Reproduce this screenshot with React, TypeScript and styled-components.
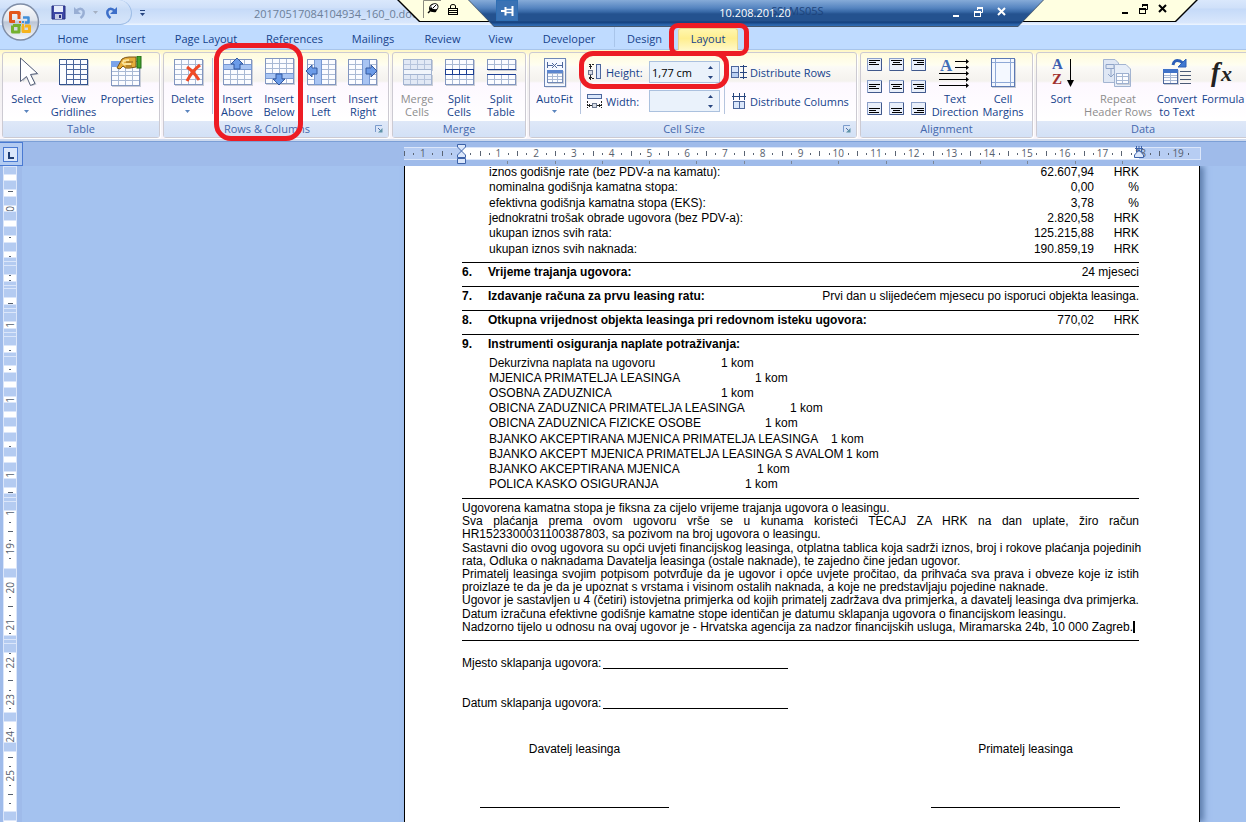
import React from "react";
import styled, { createGlobalStyle, css } from "styled-components";

const GlobalStyle = createGlobalStyle`
  *, *::before, *::after { box-sizing: border-box; }
  body { margin: 0; background: #a4c2ef; overflow: hidden; }
  button, input { font: inherit; color: inherit; margin: 0; }
`;

const uiFont = '"Open Sans", "Noto Sans", sans-serif';
const docFont = '"Liberation Sans", Arial, sans-serif';

/* ---------- frame ---------- */

const Window = styled.div`
  position: relative;
  display: flex;
  flex-direction: column;
  height: 100vh;
  min-width: 0;
  overflow: hidden;
  font: 11px/13px ${uiFont};
  color: #15428b;
`;

const PlainButton = styled.button`
  display: flex;
  align-items: center;
  justify-content: center;
  padding: 0;
  border: 0;
  background: none;
  white-space: nowrap;
`;

const TitleBar = styled.header`
  display: flex;
  align-items: center;
  height: 25px;
  flex: none;
  padding-left: 40px;
  background: linear-gradient(#dae8fc 0, #cfe0f9 8px, #c5daf8 9px, #d9e7fc 23px, #eaf3ff 24px);
`;

const OfficeButton = styled(PlainButton)`
  position: absolute;
  z-index: 3;
  left: 1px;
  top: 2px;
  width: 40px;
  height: 40px;
`;

const QuickAccess = styled.div`
  display: flex;
  align-items: center;
  align-self: stretch;
  width: 92px;
  gap: 7px;
  padding: 0 12px 0 11px;
  border: 1px solid #9ebde6;
  border-width: 0 1px 1px 0;
  border-radius: 0 14px 12px 0;
  background: linear-gradient(#dce9fb, #c9dcf6 40%, #d6e5fa);
`;

const CustomizeButton = styled(PlainButton)`
  width: 20px;
`;

const DocumentTitle = styled.h1`
  margin: 2px 0 0 102px;
  font: 11px/13px ${uiFont};
  color: #6c7f99;
`;

/* ---------- remote connection bar ---------- */

const HostBar = styled.div`
  position: absolute;
  z-index: 4;
  top: 0;
  left: 397px;
  width: 801px;
  height: 22px;
  display: flex;
  align-items: flex-start;
  justify-content: space-between;
  padding: 0 29px 0 26px;
  background: #000;
  clip-path: polygon(0 0, 22px 100%, calc(100% - 22px) 100%, 100% 0);

  &::before {
    content: "";
    position: absolute;
    inset: 0 2px 1px 2px;
    background: #ffffe1;
    clip-path: polygon(0 0, 21px 100%, calc(100% - 21px) 100%, 100% 0);
  }
`;

const HostGroup = styled.div`
  position: relative;
  display: flex;
  align-items: center;
  gap: 7px;
  color: #000;
  height: 18px;
`;

const RemoteBar = styled.div`
  position: absolute;
  z-index: 5;
  top: 0;
  left: 468px;
  width: 576px;
  height: 27px;
  background: #46586e;
  clip-path: polygon(0 0, 26px 100%, calc(100% - 26px) 100%, 100% 0);
`;

const RemoteFace = styled.div`
  display: grid;
  grid-template-columns: 1fr auto 1fr;
  align-items: start;
  height: 26px;
  padding: 0 36px 0 28px;
  background: linear-gradient(#86abd8 0, #5584c0 8px, #3667a5 12px, #24528f 14px, #24528f 21px, #123d7a 22px, #2d68b0 25px);
  clip-path: polygon(1px 0, 26px 100%, calc(100% - 26px) 100%, calc(100% - 1px) 0);
  color: #fff;
`;

const PinButton = styled(PlainButton)`
  width: 22px;
  height: 21px;
  border: 1px solid #2f6fb4;
  background: #3a72b4;
`;

const RemoteName = styled.div`
  position: relative;
  padding: 5px 0 0 6px;
  line-height: 15px;
`;

const SessionName = styled.span`
  position: absolute;
  left: 58px;
  top: 3px;
  z-index: -1;
  line-height: 15px;
  color: #1d447c;
`;

const RemoteControls = styled.div`
  display: flex;
  justify-content: flex-end;
  align-items: center;
  gap: 11px;
  height: 24px;
`;

/* ---------- tabs ---------- */

const TabRow = styled.nav`
  display: flex;
  align-items: stretch;
  flex: none;
  height: 25px;
  padding-left: 44px;
  background: #bfdbff;
  border-bottom: 1px solid #a9c5ea;
`;

const Tab = styled(PlainButton)<{ $w: number; $active?: boolean; $context?: boolean }>`
  width: ${(p) => p.$w}px;
  padding-top: 3px;
  ${(p) =>
    p.$context &&
    css`
      margin-left: 3px;
      box-shadow: -3px 0 0 -2px #a9c5ea;
    `}
  ${(p) =>
    p.$active &&
    css`
      margin: 3px 0 -1px 4px;
      padding: 0 0 2px;
      border-radius: 3px 3px 0 0;
      border: 1px solid #e9d68c;
      border-bottom: 0;
      background: linear-gradient(#fff6ae, #ffee8e 45%, #fff8c8);
    `}
`;

/* ---------- ribbon ---------- */

const Ribbon = styled.div`
  display: flex;
  flex: none;
  height: 89px;
  gap: 3px;
  padding: 2px 0 1px 2px;
  overflow: hidden;
  background: linear-gradient(#fff7c4 0, #fffce8 8px, #f2f0f0 30px, #f8f4fa 100%);
`;

const GroupBox = styled.section<{ $w?: number }>`
  display: flex;
  flex-direction: column;
  ${(p) => (p.$w ? `flex: 0 0 ${p.$w}px;` : "flex: 1 0 214px;")}
  border: 1px solid #cccad2;
  border-radius: 3px;
  box-shadow: 1px 1px 0 #fff;
  background: linear-gradient(#fffbdc 0, #fffef0 12px, #fbfaf6 14px, #f4f2ee 28px, #fdf8ff 30px, #fff 66px);
`;

const GroupBody = styled.div`
  display: flex;
  flex: 1;
  min-height: 0;
  padding: 3px 3px 0;
`;

const GroupTitle = styled.h2<{ $launcher?: boolean }>`
  position: relative;
  flex: none;
  margin: 0;
  height: 16px;
  padding-right: ${(p) => (p.$launcher ? 18 : 0)}px;
  font: 11px/16px ${uiFont};
  text-align: center;
  color: #4568ad;
  background: linear-gradient(#dfe8f8, #d3e1f6);
`;

const Launcher = styled(PlainButton)`
  position: absolute;
  right: 5px;
  top: 4px;
`;

const BigButton = styled(PlainButton)<{ $w: number }>`
  flex: 0 0 ${(p) => p.$w}px;
  min-width: 0;
  flex-direction: column;
  justify-content: flex-start;
  &:disabled { color: #8d8d8d; }
`;

const BigLabel = styled.span`
  margin-top: 4px;
  text-align: center;
  white-space: pre;
`;

const Divider = styled.div`
  flex: none;
  width: 1px;
  height: 56px;
  margin: 2px 3px 0 4px;
  background: #b5c4de;
`;

const FieldStack = styled.div`
  display: flex;
  flex-direction: column;
  gap: 7px;
  padding: 5px 0 0 3px;
`;

const Field = styled.div`
  display: grid;
  grid-template-columns: 19px 43px 71px;
  align-items: center;
  height: 22px;
`;

const SpinBox = styled.div`
  display: flex;
  height: 22px;
  border: 1px solid #abc1de;
  background: #eaf2fb;
`;

const SpinInput = styled.input`
  flex: 1;
  min-width: 0;
  padding: 0 2px;
  border: 0;
  outline: 0;
  background: transparent;
  color: #000;
`;

const SpinArrows = styled.div`
  display: flex;
  flex-direction: column;
  width: 17px;
`;

const SpinButton = styled(PlainButton)`
  flex: 1;
`;

const DistributeButton = styled(PlainButton)`
  justify-content: flex-start;
  gap: 2px;
  height: 22px;
`;

const AlignGrid = styled.div`
  display: grid;
  flex: 0 0 69px;
  grid-template-columns: repeat(3, 22px);
  grid-auto-rows: 22px;
  padding: 2px 0 0 3px;
`;

const AlignButton = styled(PlainButton)`
  align-items: flex-start;
  justify-content: flex-start;
`;

/* ---------- rulers ---------- */

const RulerRow = styled.div`
  display: flex;
  flex: none;
  height: 27px;
  border-top: 2px solid #cdd9ee;
  background: #9fbbea;
  box-shadow: inset 0 1px 0 #7c9fd6;
`;

const TabStop = styled(PlainButton)`
  width: 23px;
  height: 24px;
  margin-top: 1px;
  border: 1px solid #4a7ad2;
  border-left: 0;
  background: #b3cbf1;
  padding-right: 1px;
`;

const RulerTrack = styled.div`
  position: relative;
  width: 797px;
  margin: 6px 0 0 381px;
`;

const RulerCells = styled.div`
  display: grid;
  grid-template-columns: repeat(21, 1fr);
  height: 13px;
  padding-right: 3px;
  border: 1px solid #dbe6fa;
  border-left-width: 0;
  background: linear-gradient(90deg, #b7cdf3 57px, #fff 57px, #fff 735px, #b7cdf3 735px);
`;

const RulerCell = styled.span`
  font: 10px/11px ${uiFont};
  text-align: center;
  color: #56606e;
  background:
    linear-gradient(#5a6473, #5a6473) 0 50% / 1px 5px no-repeat,
    linear-gradient(#5a6473, #5a6473) 25% 50% / 1px 2px no-repeat,
    linear-gradient(#5a6473, #5a6473) 77% 50% / 1px 2px no-repeat;
`;

const DefaultTabs = styled.div`
  display: grid;
  grid-template-columns: repeat(14, 1fr);
  width: 662px;
  height: 3px;
  margin: 1px 0 0 57px;
  & > i { border-right: 1px solid #7b8696; }
`;

const IndentMarker = styled.div<{ $x: number }>`
  position: absolute;
  left: ${(p) => p.$x}px;
  top: -4px;
`;

const Workspace = styled.main`
  display: flex;
  flex: 1;
  min-height: 0;
  overflow: hidden;
`;

const VRulerGutter = styled.div`
  flex: 0 0 22px;
  padding-left: 3px;
  background: #9fbbea;
`;

const VRuler = styled.div`
  display: flex;
  flex-direction: column;
  gap: 1px;
  width: 14px;
  padding: 1px;
  background: #dbe6fa;
`;

const VSegment = styled.div<{ $h: number; $white?: boolean; $top?: number; $bottom?: number }>`
  display: flex;
  flex: none;
  flex-direction: column;
  align-items: center;
  justify-content: space-between;
  overflow: hidden;
  height: ${(p) => p.$h}px;
  padding: ${(p) => p.$top ?? 0}px 0 ${(p) => p.$bottom ?? 0}px;
  background: ${(p) => (p.$white ? "#fff" : "#b4cbf1")};
`;

const VMark = styled.span`
  display: flex;
  align-items: center;
  justify-content: center;
  height: 0;
  width: 12px;
  color: #56606e;
  font: 10px/12px ${uiFont};
  & > b { writing-mode: vertical-rl; transform: rotate(180deg); font-weight: 400; }
  & > i { height: 1px; flex: none; background: #56606e; }
`;

/* ---------- document ---------- */

const Page = styled.article`
  flex: 0 0 796px;
  min-width: 0;
  margin-left: 382px;
  padding: 0 60px 0 57px;
  border: solid #000;
  border-width: 0 1px;
  background: #fff;
  box-shadow: 4px 0 6px #5f7fae;
  color: #000;
  font: 12px/13px ${docFont};
  white-space: nowrap;
`;

const CostTable = styled.table`
  width: 100%;
  height: 92px;
  margin-bottom: 4px;
  border-collapse: collapse;
  td { padding: 0; vertical-align: top; }
  td:first-child { padding-left: 27px; }
  td:nth-child(2) { text-align: right; width: 120px; }
  td:last-child { text-align: right; width: 45px; }
`;

const Clause = styled.div`
  display: grid;
  grid-template-columns: 26px 1fr auto auto;
  height: 24px;
  padding-top: 3px;
  border-top: 1px solid #000;
`;

const Strong = styled.b``;

const Unit = styled.span`
  width: 45px;
  text-align: right;
`;

const Instruments = styled.ul`
  display: grid;
  grid-auto-rows: 1fr;
  height: 136px;
  margin: -2px 0 6px;
  padding: 0 0 0 27px;
  list-style: none;
  align-items: center;
`;

const Instrument = styled.li<{ $tab: number }>`
  display: flex;
  & > span { width: ${(p) => p.$tab}px; }
`;

const Terms = styled.div`
  display: grid;
  grid-template-columns: 100%;
  grid-auto-rows: 1fr;
  height: 143px;
  padding: 3px 0 6px;
  border: solid #000;
  border-width: 1px 0;
`;

const Line = styled.p<{ $justify?: boolean }>`
  margin: 0;
  text-align-last: ${(p) => (p.$justify ? "justify" : "left")};
`;

const Caret = styled.span`
  display: inline-block;
  width: 2px;
  height: 12px;
  vertical-align: -2px;
  background: #000;
`;

const SignLine = styled.div`
  display: flex;
  gap: 2px;
  height: 40px;
  padding-top: 16px;
`;

const Blank = styled.span`
  width: 185px;
  height: 12px;
  border-bottom: 1px solid #000;
`;

const Signatures = styled.div`
  display: flex;
  justify-content: space-between;
  margin-top: 22px;
  padding: 0 19px 0 18px;
`;

const Signature = styled.div`
  width: 189px;
  height: 65px;
  border-bottom: 1px solid #000;
  text-align: center;
`;

const RedMark = styled.div<{ $x: number; $y: number; $w: number; $h: number; $r: number }>`
  position: absolute;
  z-index: 6;
  left: ${(p) => p.$x}px;
  top: ${(p) => p.$y}px;
  width: ${(p) => p.$w}px;
  height: ${(p) => p.$h}px;
  border: 5px solid #ed1c24;
  border-radius: ${(p) => p.$r}px;
  pointer-events: none;
`;

/* ---------- icons ---------- */

const IconFrame = styled.svg`
  flex: none;
`;

const Svg = ({ w = 32, h = 32, children }: { w?: number; h?: number; children: React.ReactNode }) => (
  <IconFrame width={w} height={h} viewBox={`0 0 ${w} ${h}`} fill="none" aria-hidden="true">
    {children}
  </IconFrame>
);

type GridProps = { x: number; y: number; w: number; h: number; cols: number; rows: number; stroke?: string; fill?: string; edge?: string };
const Grid = ({ x, y, w, h, cols, rows, stroke = "#a9b9d4", fill = "#fbfcff", edge = "#8296c0" }: GridProps) => (
  <g shapeRendering="crispEdges">
    <rect x={x + 1} y={y + 1} width={w} height={h} fill="#c9cdd6" />
    <rect x={x} y={y} width={w} height={h} fill={fill} />
    {Array.from({ length: cols - 1 }, (_, i) => (
      <rect key={`c${i}`} x={x + Math.round(((i + 1) * (w - 1)) / cols)} y={y} width="1" height={h} fill={stroke} />
    ))}
    {Array.from({ length: rows - 1 }, (_, i) => (
      <rect key={`r${i}`} x={x} y={y + Math.round(((i + 1) * (h - 1)) / rows)} width={w} height="1" fill={stroke} />
    ))}
    <rect x={x + 0.5} y={y + 0.5} width={w - 1} height={h - 1} stroke={edge} />
  </g>
);

const arrowPath = "M0 -6 L6 0 H3 V5 H-3 V0 H-6 Z";
const Arrow = ({ x, y, r }: { x: number; y: number; r: number }) => (
  <path d={arrowPath} transform={`translate(${x} ${y}) rotate(${r})`} fill="#6b9be8" stroke="#33589f" />
);

const Drop = ({ color = "#4a6ea9" }: { color?: string }) => (
  <svg width="5" height="3" viewBox="0 0 5 3" aria-hidden="true">
    <path d="M0 0H5L2.500 3Z" fill={color} />
  </svg>
);

const icons = {
  select: (
    <Svg>
      <path d="M11 3 L12 26 L16.500 21 L21 30 L25.500 28.500 L21 19.500 L28 18.500 Z" fill="#c8ccd4" />
      <path d="M9.500 2 V25.500 L15.500 20.500 L19.500 29.500 L24 27.500 L19.500 18.500 L26.500 17.500 Z" fill="#fff" stroke="#566079" />
    </Svg>
  ),
  gridlines: (
    <Svg>
      <Grid x={1} y={3} w={29} h={26} cols={1} rows={1} edge="#30508c" />
      <g fill="#4a659b" shapeRendering="crispEdges">
        <rect x="1" y="8" width="29" height="1" />
        {[8, 15, 22].map((x) => <rect key={x} x={x} y="3" width="1" height="26" />)}
        {[13, 18, 23].map((y) => <rect key={y} x="8" y={y} width="22" height="1" />)}
      </g>
    </Svg>
  ),
  properties: (
    <Svg>
      <Grid x={0} y={5} w={29} h={25} cols={4} rows={5} />
      <rect x="0" y="5" width="14" height="6" fill="#7ba3ea" />
      <path d="M6 12 L11 3 Q14 1 18 1 L25 1 V11 L19 12 Q14 13 12 10 L9 13 Z" fill="#e5ad3a" stroke="#7b5415" />
      <path d="M12 5 L18 4 M14 8 H20 M11 6 L14 9" stroke="#fbe39a" strokeWidth="2" />
      <path d="M15 6 H22 M15 10 H21" stroke="#8a5f18" />
      <rect x="26" y="0" width="4" height="12" fill="#43a32c" stroke="#226b16" />
    </Svg>
  ),
  del: (
    <Svg>
      <Grid x={2} y={3} w={29} h={26} cols={4} rows={5} />
      <path d="M15 11 Q22 16 27 24 M28 9 Q20 15 15 25" stroke="#f04a26" strokeWidth="3" />
    </Svg>
  ),
  above: (
    <Svg>
      <Grid x={2} y={3} w={29} h={26} cols={4} rows={5} />
      <rect x="2.500" y="8.500" width="28" height="5" fill="#a9c5f3" stroke="#7798d2" />
      <Arrow x={16} y={8} r={0} />
    </Svg>
  ),
  below: (
    <Svg>
      <Grid x={2} y={2} w={29} h={26} cols={4} rows={5} />
      <rect x="2.500" y="17.500" width="28" height="5" fill="#a9c5f3" stroke="#7798d2" />
      <Arrow x={16} y={23} r={180} />
    </Svg>
  ),
  left: (
    <Svg>
      <Grid x={2} y={3} w={29} h={26} cols={4} rows={5} />
      <rect x="9.500" y="3.500" width="7" height="25" fill="#a9c5f3" stroke="#7798d2" />
      <Arrow x={7} y={15} r={-90} />
    </Svg>
  ),
  right: (
    <Svg>
      <Grid x={1} y={3} w={29} h={26} cols={4} rows={5} />
      <rect x="15.500" y="3.500" width="7" height="25" fill="#a9c5f3" stroke="#7798d2" />
      <Arrow x={24} y={15} r={90} />
    </Svg>
  ),
  mergeCells: (
    <Svg>
      <Grid x={2} y={3} w={29} h={11} cols={4} rows={2} fill="#e2e9f5" edge="#a3b4d1" stroke="#b6c4dc" />
      <Grid x={2} y={18} w={29} h={11} cols={4} rows={2} fill="#e2e9f5" edge="#a3b4d1" stroke="#b6c4dc" />
      <rect x="2.500" y="13.500" width="28" height="5" fill="#f1f5fb" stroke="#a3b4d1" />
    </Svg>
  ),
  splitCells: (
    <Svg>
      <Grid x={2} y={3} w={29} h={26} cols={4} rows={5} />
      <rect x="2.500" y="13.500" width="28" height="5" fill="#fff" stroke="#1c3f94" />
      <path d="M9.500 14 V18 M16.500 14 V18 M23.500 14 V18" stroke="#1c3f94" />
    </Svg>
  ),
  splitTable: (
    <Svg>
      <Grid x={2} y={3} w={29} h={11} cols={4} rows={2} />
      <Grid x={2} y={18} w={29} h={11} cols={4} rows={2} />
      <path d="M2 13.500 H31 M2 18.500 H31" stroke="#1c3f94" />
    </Svg>
  ),
  autofit: (
    <Svg>
      <rect x="6.500" y="3.500" width="21" height="28" fill="#c9cdd6" />
      <rect x="5.500" y="2.500" width="21" height="28" fill="#f4f8ff" stroke="#6f87b5" />
      <path d="M8.500 6 V12 M23.500 6 V12 M9 9.500 H14 M18 9.500 H23 M13 7 L18 12 M18 7 L13 12" stroke="#4d679c" />
      <Grid x={8} y={14} w={16} h={13} cols={3} rows={4} edge="#6f87b5" />
      <rect x="8" y="14" width="16" height="3" fill="#5c86cf" />
    </Svg>
  ),
  textDirection: (
    <Svg>
      <text x="1" y="15" fontFamily="Liberation Serif, serif" fontWeight="700" fontSize="17" fill="#3f6fb8">A</text>
      <path d="M16 5.500 H28 M16 11.500 H28 M0 17.500 H28 M0 23.500 H28 M0 29.500 H28" stroke="#000" />
      <path d="M27 3 l3 2.500 l-3 2.500z M27 9 l3 2.500 l-3 2.500z M27 15 l3 2.500 l-3 2.500z M27 21 l3 2.500 l-3 2.500z M27 27 l3 2.500 l-3 2.500z" fill="#000" />
    </Svg>
  ),
  cellMargins: (
    <Svg>
      <rect x="5" y="3" width="24" height="29" fill="#c9cdd6" />
      <rect x="4.500" y="2.500" width="23" height="28" fill="#f4f8ff" stroke="#5c79b3" />
      <path d="M8.500 3 V30 M23.500 3 V30 M5 6.500 H27 M5 26.500 H27" stroke="#8ea8d6" />
    </Svg>
  ),
  sort: (
    <Svg>
      <text x="7" y="13" fontFamily="Liberation Serif, serif" fontWeight="700" fontSize="15" fill="#3c5fb0">A</text>
      <text x="7" y="28" fontFamily="Liberation Serif, serif" fontWeight="700" fontSize="15" fill="#a0312f">Z</text>
      <path d="M25.500 3 V26" stroke="#000" />
      <path d="M22 24 H29 L25.500 31 Z" fill="#000" />
    </Svg>
  ),
  repeat: (
    <Svg>
      <path d="M1.500 3.500 H13 L16.500 7 V26.500 H1.500 Z" fill="#dfe7f4" stroke="#a3b4d1" />
      <path d="M4 8.500 H12 V12.500 H4 Z M9 13 V21 M6 18 L9 21 L12 18" stroke="#8fa4c8" />
      <path d="M12.500 8.500 H24 L28.500 13 V30.500 H12.500 Z" fill="#e6edf8" stroke="#a3b4d1" />
      <Grid x={14} y={17} w={13} h={11} cols={2} rows={3} edge="#9db0d0" />
    </Svg>
  ),
  convert: (
    <Svg>
      <path d="M12 9 Q13 3 19 5 Q21 6 22 8" stroke="#2c5fb8" strokeWidth="3" />
      <path d="M25 3 V11 H17 Z" fill="#4079d0" stroke="#2c5fb8" />
      <Grid x={2} y={13} w={15} h={15} cols={2} rows={5} edge="#4d679c" />
      <rect x="2" y="13" width="15" height="4" fill="#3f72c8" />
      <path d="M19 15.500 H30 M19 19.500 H30 M19 23.500 H30 M19 27.500 H30" stroke="#4a5a75" />
    </Svg>
  ),
  formula: (
    <Svg>
      <text x="4" y="25" fontFamily="Liberation Serif, serif" fontStyle="italic" fontWeight="700" fontSize="27" fill="#222">f</text>
      <text x="14" y="25" fontFamily="Liberation Serif, serif" fontStyle="italic" fontWeight="700" fontSize="22" fill="#222">x</text>
    </Svg>
  ),
};

const HeightIcon = () => (
  <Svg w={16} h={16}>
    <path d="M2 .5 H8 M2 14.500 H8" stroke="#222" strokeDasharray="2 1" />
    <path d="M3.500 0 V5 M3.500 11 V16 M2 2.500 H5 M2 13.500 H5" stroke="#222" />
    <rect x="1.500" y="6.500" width="4" height="4" fill="#d7dce6" stroke="#6d7891" />
    <rect x="9.500" y=".5" width="4" height="14" fill="#dbe7fb" stroke="#4d679c" />
  </Svg>
);
const WidthIcon = () => (
  <Svg w={16} h={16}>
    <rect x=".5" y="1.500" width="14" height="4" fill="#dbe7fb" stroke="#4d679c" />
    <path d="M.5 8 V15 M14.500 8 V15" stroke="#222" strokeDasharray="2 1" />
    <path d="M0 12.500 H5 M10 12.500 H15 M2.500 11 V14 M12.500 11 V14" stroke="#222" />
    <rect x="5.500" y="10.500" width="4" height="4" fill="#d7dce6" stroke="#6d7891" />
  </Svg>
);
const RowsIcon = () => (
  <Svg w={17} h={16}>
    <rect x=".5" y="2.500" width="7" height="6" fill="#dbe7fb" stroke="#4d679c" />
    <rect x=".5" y="8.500" width="7" height="5" fill="#b9cff2" stroke="#4d679c" />
    <path d="M9 2.500 H16 M9 8.500 H16 M9 13.500 H16 M12.500 1 V15" stroke="#27457f" />
  </Svg>
);
const ColsIcon = () => (
  <Svg w={17} h={16}>
    <rect x="2.500" y="8.500" width="6" height="7" fill="#dbe7fb" stroke="#4d679c" />
    <rect x="8.500" y="8.500" width="5" height="7" fill="#dbe7fb" stroke="#4d679c" />
    <path d="M2.500 0 V7 M8.500 0 V7 M13.500 0 V7 M1 3.500 H15" stroke="#27457f" />
  </Svg>
);

const AlignIcon = ({ v, h }: { v: number; h: number }) => (
  <Svg w={15} h={13}>
    <rect x=".5" y=".5" width="14" height="12" fill="#e9effa" stroke="#8b9fc8" />
    <path d="M1 12.500 H14.500 V1" stroke="#41598c" />
    {[11, 7, 10].map((w, i) => (
      <rect key={i} x={2 + Math.round(((11 - w) * h) / 2)} y={2 + v * 2 + i * 2} width={w} height="1" fill="#000" />
    ))}
  </Svg>
);

const SaveIcon = () => (
  <Svg w={15} h={15}>
    <path d="M1 1 H14 V14 H1 Z" fill="#3d47a5" stroke="#262f80" />
    <rect x="3" y="1" width="9" height="6" fill="#e6ecfa" />
    <rect x="4" y="9" width="7" height="5" fill="#c5cbe6" />
    <rect x="8" y="10" width="2" height="3" fill="#262f80" />
  </Svg>
);
const CurveIcon = ({ flip, color }: { flip?: boolean; color: string }) => (
  <Svg w={13} h={13}>
    <g transform={flip ? "translate(13 0) scale(-1 1)" : undefined}>
      <path d="M3 5 Q8 .5 10.500 5 Q11.500 9 7.500 12" stroke={color} strokeWidth="2.500" />
      <path d="M1 1 V8 H8 Z" fill={color} />
    </g>
  </Svg>
);

const OfficeLogo = () => (
  <svg width="40" height="40" viewBox="0 0 40 40" aria-hidden="true">
    <defs>
      <linearGradient id="orb" x1="0" y1="0" x2="0" y2="1">
        <stop offset="0" stopColor="#fdfdfe" />
        <stop offset=".45" stopColor="#dfe4ec" />
        <stop offset=".5" stopColor="#bcc6d6" />
        <stop offset="1" stopColor="#f6f9fd" />
      </linearGradient>
    </defs>
    <circle cx="19.500" cy="20" r="18" fill="url(#orb)" stroke="#7f8da6" strokeWidth="1.500" />
    <g fill="none" strokeWidth="3" strokeLinejoin="round">
      <path d="M18 13 V10.500 H9.500 V19.500 H14" stroke="#e2561b" />
      <path d="M18 10 V17" stroke="#e2561b" />
      <path d="M22 15.500 H27.500 V20.500 H24" stroke="#3f8fd9" strokeWidth="2.500" />
      <path d="M12 23.500 H18 V30 H11.500 V23.500" stroke="#74b12f" strokeWidth="3" />
      <path d="M22 24 V29.500 H28.500 V24 H24" stroke="#f6b31c" strokeWidth="3" />
    </g>
    <g>
      <rect x="18" y="19" width="2" height="2" fill="#e2561b" />
      <rect x="21" y="19" width="2" height="2" fill="#3f8fd9" />
      <rect x="18" y="22" width="2" height="2" fill="#74b12f" />
      <rect x="21" y="22" width="2" height="2" fill="#f6b31c" />
    </g>
  </svg>
);

const MinIcon = () => <Svg w={12} h={12}><rect x="3" y="9" width="6" height="2" fill="currentColor" /></Svg>;
const RestoreIcon = () => (
  <Svg w={12} h={12}>
    <path d="M4.500 4 V1.500 H9.500 V6.500 H8" stroke="currentColor" />
    <path d="M4 2 H10" stroke="currentColor" strokeWidth="2" />
    <rect x="1.500" y="5.500" width="6" height="5" stroke="currentColor" />
    <path d="M1 6 H8" stroke="currentColor" strokeWidth="2" />
  </Svg>
);
const CloseIcon = () => <Svg w={12} h={12}><path d="M2 2 L9 9 M9 2 L2 9" stroke="currentColor" strokeWidth="2" /></Svg>;

/* ---------- data ---------- */

const tabs: [string, number][] = [
  ["Home", 58], ["Insert", 57], ["Page Layout", 94], ["References", 83], ["Mailings", 74],
  ["Review", 65], ["View", 51], ["Developer", 86],
];

const costs = [
  ["iznos godišnje rate (bez PDV-a na kamatu):", "62.607,94", "HRK"],
  ["nominalna godišnja kamatna stopa:", "0,00", "%"],
  ["efektivna godišnja kamatna stopa (EKS):", "3,78", "%"],
  ["jednokratni trošak obrade ugovora (bez PDV-a):", "2.820,58", "HRK"],
  ["ukupan iznos svih rata:", "125.215,88", "HRK"],
  ["ukupan iznos svih naknada:", "190.859,19", "HRK"],
];

const instruments: [string, number][] = [
  ["Dekurzivna naplata na ugovoru", 232],
  ["MJENICA PRIMATELJA LEASINGA", 266],
  ["OSOBNA ZADUZNICA", 232],
  ["OBICNA ZADUZNICA PRIMATELJA LEASINGA", 301],
  ["OBICNA ZADUZNICA FIZICKE OSOBE", 276],
  ["BJANKO AKCEPTIRANA MJENICA PRIMATELJA LEASINGA", 342],
  ["BJANKO AKCEPT MJENICA PRIMATELJA LEASINGA S AVALOM", 357],
  ["BJANKO AKCEPTIRANA MJENICA", 268],
  ["POLICA KASKO OSIGURANJA", 256],
];

const terms: [string, boolean][] = [
  ["Ugovorena kamatna stopa je fiksna za cijelo vrijeme trajanja ugovora o leasingu.", false],
  ["Sva plaćanja prema ovom ugovoru vrše se u kunama koristeći TECAJ ZA HRK na dan uplate, žiro račun", true],
  ["HR1523300031100387803, sa pozivom na broj ugovora o leasingu.", false],
  ["Sastavni dio ovog ugovora su opći uvjeti financijskog leasinga, otplatna tablica koja sadrži iznos, broj i rokove plaćanja pojedinih", true],
  ["rata, Odluka o naknadama Davatelja leasinga (ostale naknade), te zajedno čine jedan ugovor.", false],
  ["Primatelj leasinga svojim potpisom potvrđuje da je ugovor i opće uvjete pročitao, da prihvaća sva prava i obveze koje iz istih", true],
  ["proizlaze te da je da je upoznat s vrstama i visinom ostalih naknada, a koje ne predstavljaju pojedine naknade.", false],
  ["Ugovor je sastavljen u 4 (četiri) istovjetna primjerka od kojih primatelj zadržava dva primjerka, a davatelj leasinga dva primjerka.", false],
  ["Datum izračuna efektivne godišnje kamatne stope identičan je datumu sklapanja ugovora o financijskom leasingu.", false],
];

/* A segment is [height, marks, space above first mark, space below last]; no marks means a row gap. */
type Segment = [number, string?, number?, number?];
const segments: Segment[] = [
  [7], [5, ""], [8], [6, "-", 1], [8], [5, "0", 3], [8], [5, ""], [8], [6, ".", 1], [8], [5, ".", 4],
  [3], [3], [8], [6, ". .", 0, 1], [3], [2], [8], [6, "-", 5], [3], [3], [8], [6, "1", 3],
  [3], [3], [8], [6, ".", 4], [3], [8], [6, ".", 3], [8], [5, ""], [8], [5, "1", 3],
  [8], [5, ""], [8], [5, ""], [8], [5, ".", 4], [8], [5, ""], [8], [6, "1", 3], [8], [5, "-", 4],
  [3], [3], [8], [57, "1 . - . 19 .", 2, 10], [8], [57, "20 . - . 21 .", 10, 1], [3], [3], [8],
  [59, ". 22 . - . 23 .", 0, 3], [8], [20, ". 24", 6, 5], [8], [59, "- . 25 . - .", 5, 7], [8], [5, ""],
];

/* ---------- parts ---------- */

const Big = ({ icon, label, w, menu, disabled }: { icon: keyof typeof icons; label: string; w: number; menu?: boolean; disabled?: boolean }) => (
  <BigButton type="button" $w={w} disabled={disabled}>
    {icons[icon]}
    <BigLabel>{label}</BigLabel>
    {menu && <Svg w={7} h={11}><path d="M1 5H6L3.500 8Z" fill="#5a84bd" /></Svg>}
  </BigButton>
);

const Group = ({ title, w, launcher, children }: { title: string; w?: number; launcher?: boolean; children: React.ReactNode }) => (
  <GroupBox $w={w}>
    <GroupBody>{children}</GroupBody>
    <GroupTitle $launcher={launcher}>
      {title}
      {launcher && (
        <Launcher type="button" aria-label={`${title} options`}>
          <Svg w={8} h={8}>
            <path d="M.5 7 V.5 H7" stroke="#7b9ccd" />
            <path d="M3 3 L6 6" stroke="#4a6ea9" />
            <path d="M7.500 3 V7.500 H3 Z" fill="#5f93a8" />
          </Svg>
        </Launcher>
      )}
    </GroupTitle>
  </GroupBox>
);

const Spin = ({ id, label, value, icon }: { id: string; label: string; value: string; icon: React.ReactNode }) => (
  <Field>
    {icon}
    <label htmlFor={id}>{label}</label>
    <SpinBox>
      <SpinInput id={id} defaultValue={value} />
      <SpinArrows>
        <SpinButton type="button" aria-label={`Increase ${id}`}>
          <Svg w={5} h={3}><path d="M0 3H5L2.500 0Z" fill="#27457f" /></Svg>
        </SpinButton>
        <SpinButton type="button" aria-label={`Decrease ${id}`}><Drop color="#27457f" /></SpinButton>
      </SpinArrows>
    </SpinBox>
  </Field>
);

const MarkBar = styled.i<{ $w: number }>`
  width: ${(p) => p.$w}px;
`;

const Mark = ({ m }: { m: string }) => {
  if (m === "-") return <VMark><MarkBar $w={5} /></VMark>;
  if (m === ".") return <VMark><MarkBar $w={2} /></VMark>;
  return <VMark><b>{m}</b></VMark>;
};

export default function App() {
  return (
    <Window>
      <GlobalStyle />
      <TitleBar>
        <QuickAccess>
          <PlainButton type="button" aria-label="Save"><SaveIcon /></PlainButton>
          <PlainButton type="button" aria-label="Undo"><CurveIcon color="#98aed4" /></PlainButton>
          <PlainButton type="button" aria-label="Undo history"><Drop color="#a5b0c2" /></PlainButton>
          <PlainButton type="button" aria-label="Repeat"><CurveIcon flip color="#3d6fc9" /></PlainButton>
        </QuickAccess>
        <CustomizeButton type="button" aria-label="Customize toolbar">
          <Svg w={7} h={8}><path d="M1 1.500 H6" stroke="#27457f" /><path d="M1 4H6L3.500 7Z" fill="#27457f" /></Svg>
        </CustomizeButton>
        <DocumentTitle>20170517084104934_160_0.doc</DocumentTitle>
      </TitleBar>
      <OfficeButton type="button" aria-label="Office menu"><OfficeLogo /></OfficeButton>

      <HostBar>
        <HostGroup>
          <PlainButton type="button" aria-label="Pin">
            <Svg w={18} h={18}>
              <path d="M.5 18 V.5 H18" stroke="#8c8c80" />
              <path d="M5 13 L8 10" stroke="#000" strokeWidth="1.500" />
              <ellipse cx="11" cy="7.500" rx="4.500" ry="3.500" transform="rotate(-30 11 8)" fill="#fff" stroke="#000" />
              <path d="M8 6 Q9 10 14 9 L13 12 Q9 13 6.500 10 Z" fill="#000" />
              <path d="M10 8 L13 5" stroke="#000" />
            </Svg>
          </PlainButton>
          <Svg w={10} h={14}>
            <path d="M2.500 6 V4 Q2.500 2.500 5 2.500 Q7.500 2.500 7.500 4 V6" stroke="#000" />
            <path d="M1 6.500 H9 M0 8.500 H10 M0 10.500 H10 M0 12.500 H10" stroke="#000" />
            <path d="M.5 6 V13 M9.500 6 V13" stroke="#000" />
          </Svg>
        </HostGroup>
        <HostGroup>
          <PlainButton type="button" aria-label="Minimize host"><MinIcon /></PlainButton>
          <PlainButton type="button" aria-label="Restore host"><RestoreIcon /></PlainButton>
          <PlainButton type="button" aria-label="Close host"><CloseIcon /></PlainButton>
        </HostGroup>
      </HostBar>
      <RemoteBar>
        <RemoteFace>
          <PinButton type="button" aria-label="Pin connection bar">
            <Svg w={14} h={12}>
              <path d="M1 6 H5 M5.500 2 V10.500 M12.500 1 V11" stroke="#fff" strokeWidth="2" />
              <path d="M6 4.500 H12 M6 7.500 H12" stroke="#fff" strokeWidth="1.500" />
            </Svg>
          </PinButton>
          <RemoteName>
            <SessionName>SSLMS05S</SessionName>
            10.208.201.20
          </RemoteName>
          <RemoteControls>
            <PlainButton type="button" aria-label="Minimize"><MinIcon /></PlainButton>
            <PlainButton type="button" aria-label="Restore"><RestoreIcon /></PlainButton>
            <PlainButton type="button" aria-label="Close"><CloseIcon /></PlainButton>
          </RemoteControls>
        </RemoteFace>
      </RemoteBar>

      <TabRow>
        {tabs.map(([name, w]) => <Tab key={name} type="button" $w={w}>{name}</Tab>)}
        <Tab type="button" $w={59} $context>Design</Tab>
        <Tab type="button" $w={60} $active>Layout</Tab>
      </TabRow>

      <Ribbon>
        <Group title="Table" w={158}>
          <Big icon="select" label="Select" w={41} menu />
          <Big icon="gridlines" label={"View\nGridlines"} w={53} />
          <Big icon="properties" label="Properties" w={54} />
        </Group>
        <Group title="Rows & Columns" w={226} launcher>
          <Big icon="del" label="Delete" w={41} menu />
          <Divider />
          <Big icon="above" label={"Insert\nAbove"} w={42} />
          <Big icon="below" label={"Insert\nBelow"} w={42} />
          <Big icon="left" label={"Insert\nLeft"} w={42} />
          <Big icon="right" label={"Insert\nRight"} w={42} />
        </Group>
        <Group title="Merge" w={134}>
          <Big icon="mergeCells" label={"Merge\nCells"} w={42} disabled />
          <Big icon="splitCells" label={"Split\nCells"} w={42} />
          <Big icon="splitTable" label={"Split\nTable"} w={42} />
        </Group>
        <Group title="Cell Size" w={328} launcher>
          <Big icon="autofit" label="AutoFit" w={43} menu />
          <Divider />
          <FieldStack>
            <Spin id="height" label="Height:" value="1,77 cm" icon={<HeightIcon />} />
            <Spin id="width" label="Width:" value="" icon={<WidthIcon />} />
          </FieldStack>
          <Divider />
          <FieldStack>
            <DistributeButton type="button"><RowsIcon />Distribute Rows</DistributeButton>
            <DistributeButton type="button"><ColsIcon />Distribute Columns</DistributeButton>
          </FieldStack>
        </Group>
        <Group title="Alignment" w={173}>
          <AlignGrid>
            {[0, 1, 2].map((v) =>
              [0, 1, 2].map((h) => (
                <AlignButton key={`${v}${h}`} type="button" aria-label={`Align ${v + 1}, ${h + 1}`}>
                  <AlignIcon v={v} h={h} />
                </AlignButton>
              ))
            )}
          </AlignGrid>
          <Big icon="textDirection" label={"Text\nDirection"} w={44} />
          <Big icon="cellMargins" label={"Cell\nMargins"} w={52} />
        </Group>
        <Group title="Data">
          <Big icon="sort" label="Sort" w={42} />
          <Big icon="repeat" label={"Repeat\nHeader Rows"} w={72} disabled />
          <Big icon="convert" label={"Convert\nto Text"} w={46} />
          <Big icon="formula" label="Formula" w={46} />
        </Group>
      </Ribbon>

      <RulerRow>
        <TabStop type="button" aria-label="Tab stop">
          <Svg w={15} h={15}>
            <rect x=".5" y=".5" width="14" height="14" fill="#dbe7fb" stroke="#4a7ad2" />
            <path d="M6 5 V11 H11" stroke="#1f3d72" strokeWidth="2" />
          </Svg>
        </TabStop>
        <RulerTrack>
          <RulerCells>
            {Array.from({ length: 21 }, (_, i) => (
              <RulerCell key={i}>{i === 1 ? "" : Math.abs(i - 1)}</RulerCell>
            ))}
          </RulerCells>
          <DefaultTabs>{Array.from({ length: 14 }, (_, i) => <i key={i} />)}</DefaultTabs>
          <IndentMarker $x={53}>
            <Svg w={9} h={22}>
              <path d="M.5 1.500 H8.500 V4 L4.500 8 L.5 4 Z M4.500 8 L8.500 12 V14.500 H.5 V12 Z M.5 15.500 H8.500 V20.500 H.5 Z" fill="#dbe7fb" stroke="#3d62a8" />
            </Svg>
          </IndentMarker>
          <IndentMarker $x={730}>
            <Svg w={10} h={16}>
              <path d="M5 7 L9.500 12 V14.500 H.5 V12 Z" fill="#dbe7fb" stroke="#3d62a8" />
              <path d="M1 5.500 H9 M2.500 3 V9 M5 3 V9 M7.500 3 V9" stroke="#3d62a8" />
            </Svg>
          </IndentMarker>
        </RulerTrack>
      </RulerRow>

      <Workspace>
        <VRulerGutter>
          <VRuler>
            {segments.map(([h, marks, top, bottom], i) => (
              <VSegment key={i} $h={h} $white={marks !== undefined} $top={top} $bottom={bottom}>
                {marks ? marks.split(" ").map((m, j) => <Mark key={j} m={m} />) : null}
              </VSegment>
            ))}
          </VRuler>
        </VRulerGutter>
        <Page>
          <CostTable>
            <tbody>
              {costs.map(([name, amount, unit]) => (
                <tr key={name}><td>{name}</td><td>{amount}</td><td>{unit}</td></tr>
              ))}
            </tbody>
          </CostTable>
          <Clause><Strong>6.</Strong><Strong>Vrijeme trajanja ugovora:</Strong><span>24 mjeseci</span></Clause>
          <Clause><Strong>7.</Strong><Strong>Izdavanje računa za prvu leasing ratu:</Strong><span>Prvi dan u slijedećem mjesecu po isporuci objekta leasinga.</span></Clause>
          <Clause><Strong>8.</Strong><Strong>Otkupna vrijednost objekta leasinga pri redovnom isteku ugovora:</Strong><span>770,02</span><Unit>HRK</Unit></Clause>
          <Clause><Strong>9.</Strong><Strong>Instrumenti osiguranja naplate potraživanja:</Strong></Clause>
          <Instruments>
            {instruments.map(([name, tab]) => (
              <Instrument key={name} $tab={tab}><span>{name}</span>1 kom</Instrument>
            ))}
          </Instruments>
          <Terms>
            {terms.map(([text, justify]) => <Line key={text} $justify={justify}>{text}</Line>)}
            <Line>
              Nadzorno tijelo u odnosu na ovaj ugovor je - Hrvatska agencija za nadzor financijskih usluga, Miramarska 24b, 10 000 Zagreb.
              <Caret />
            </Line>
          </Terms>
          <SignLine>Mjesto sklapanja ugovora:<Blank /></SignLine>
          <SignLine>Datum sklapanja ugovora:<Blank /></SignLine>
          <Signatures>
            <Signature>Davatelj leasinga</Signature>
            <Signature>Primatelj leasinga</Signature>
          </Signatures>
        </Page>
      </Workspace>

      <RedMark $x={214} $y={43} $w={89} $h={98} $r={17} />
      <RedMark $x={579} $y={51} $w={150} $h={38} $r={14} />
      <RedMark $x={669} $y={23} $w={80} $h={33} $r={9} />
    </Window>
  );
}
